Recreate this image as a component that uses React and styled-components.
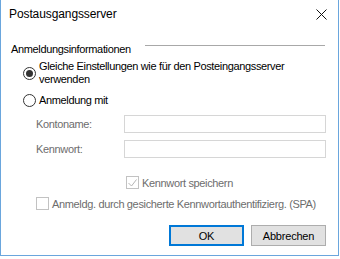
import React from 'react';
import styled, { createGlobalStyle } from 'styled-components';

const Global = createGlobalStyle`
  html, body {
    margin: 0;
    padding: 0;
    background: #fff;
    overflow: hidden;
  }
  body {
    font-family: "Liberation Sans", Arial, sans-serif;
    font-size: 11px;
    letter-spacing: -0.35px;
    color: #000;
  }
`;

const Page = styled.div`
  width: 340px;
  height: 259px;
  overflow: hidden;
`;

const Window = styled.div`
  width: 337px;
  height: 255px;
  border: 1px solid #6aa6dd;
  border-top: none;
  background: #fff;
  display: flex;
  flex-direction: column;
`;

const TitleBar = styled.div`
  height: 28px;
  display: flex;
  align-items: center;
  justify-content: space-between;
  padding: 0 9px 0 8px;
  font-size: 12px;
  letter-spacing: -0.1px;
`;

const Close = styled.svg`
  width: 11px;
  height: 11px;
  margin-right: 2px;
`;

const Body = styled.div`
  flex: 1;
  display: flex;
  flex-direction: column;
  padding: 0 12px 0 10px;
`;

const GroupHead = styled.div`
  display: flex;
  align-items: center;
  margin-top: 15px;
  height: 12px;
  padding-right: 1px;
  gap: 14px;
`;

const GroupLine = styled.div`
  flex: 1;
  height: 1px;
  background: #a8a8a8;
  margin-top: -8px;
`;

const RadioRow = styled.label`
  display: flex;
  align-items: center;
  gap: 3px;
  margin-left: 12px;
  margin-top: ${p => p.$top}px;
  line-height: 13px;
`;

const RadioCircle = styled.span`
  width: 11px;
  height: 11px;
  border: 1px solid #333;
  border-radius: 50%;
  flex: none;
  display: flex;
  align-items: center;
  justify-content: center;
  &::after {
    content: '';
    width: 7px;
    height: 7px;
    border-radius: 50%;
    background: ${p => (p.$checked ? '#333' : 'transparent')};
  }
`;

const FieldRow = styled.div`
  display: flex;
  align-items: center;
  margin-left: 25px;
  margin-top: ${p => p.$top}px;
`;

const FieldLabel = styled.span`
  width: 89px;
  color: #6d6d6d;
`;

const Input = styled.div`
  width: 202px;
  height: 16px;
  border: 1px solid #d6d6d6;
  background: #fff;
`;

const CheckRow = styled.div`
  display: flex;
  align-items: center;
  gap: 3px;
  margin-left: ${p => p.$left}px;
  margin-top: ${p => p.$top}px;
  color: #6d6d6d;
  white-space: nowrap;
`;

const Box = styled.span`
  width: 11px;
  height: 11px;
  border: 1px solid #c2c2c2;
  flex: none;
  display: flex;
  align-items: center;
  justify-content: center;
`;

const Buttons = styled.div`
  display: flex;
  justify-content: flex-end;
  gap: 7px;
  margin-top: auto;
  margin-bottom: 9px;
`;

const Button = styled.button`
  width: 75px;
  height: 21px;
  font-family: inherit;
  font-size: 11px;
  letter-spacing: -0.2px;
  color: #000;
  background: #e1e1e1;
  border: 1px solid ${p => (p.$default ? '#0078d7' : '#adadad')};
  box-shadow: ${p => (p.$default ? 'inset 0 0 0 1px #0078d7' : 'none')};
  padding: 0;
`;

const Below = styled.div`
  margin: 2px 0 0 26px;
  font-size: 11px;
  white-space: nowrap;
`;

export default function App() {
  return (
    <Page>
      <Global />
      <Window>
        <TitleBar>
          <span>Postausgangsserver</span>
          <Close viewBox="0 0 11 11">
            <path d="M0.5 0.5 L10.5 10.5 M10.5 0.5 L0.5 10.5" stroke="#111" strokeWidth="1" fill="none" />
          </Close>
        </TitleBar>
        <Body>
          <GroupHead>
            <span>Anmeldungsinformationen</span>
            <GroupLine />
          </GroupHead>
          <RadioRow $top={5}>
            <RadioCircle $checked />
            <span>Gleiche Einstellungen wie für den Posteingangsserver<br />verwenden</span>
          </RadioRow>
          <RadioRow $top={8}>
            <RadioCircle />
            <span>Anmeldung mit</span>
          </RadioRow>
          <FieldRow $top={8}>
            <FieldLabel>Kontoname:</FieldLabel>
            <Input />
          </FieldRow>
          <FieldRow $top={7}>
            <FieldLabel>Kennwort:</FieldLabel>
            <Input />
          </FieldRow>
          <CheckRow $left={115} $top={18}>
            <Box>
              <svg width="9" height="8" viewBox="0 0 9 8">
                <path d="M0.5 4 L3.5 7 L8.5 0.5" stroke="#b5b5b5" strokeWidth="1" fill="none" />
              </svg>
            </Box>
            <span>Kennwort speichern</span>
          </CheckRow>
          <CheckRow $left={25} $top={8}>
            <Box />
            <span>Anmeldg. durch gesicherte Kennwortauthentifizierg. (SPA)</span>
          </CheckRow>
          <Buttons>
            <Button $default>OK</Button>
            <Button>Abbrechen</Button>
          </Buttons>
        </Body>
      </Window>
      <Below>◯ Anmeldung durch gesicherte Kennwortauthentifizierung (SPA) verwenden</Below>
    </Page>
  );
}
